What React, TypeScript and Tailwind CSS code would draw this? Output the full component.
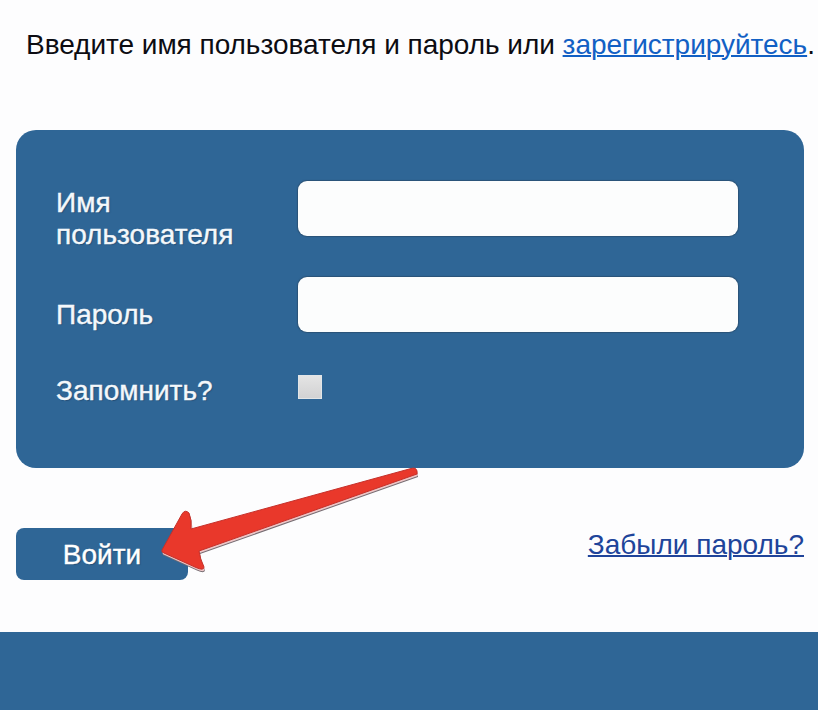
import type { ReactNode } from "react";

// ---------------------------------------------------------------------------
// Form pieces
// ---------------------------------------------------------------------------

interface FieldRowProps {
  id: string;
  label: ReactNode;
  className: string;
  labelClassName: string;
  children: ReactNode;
}

function FieldRow({ id, label, className, labelClassName, children }: FieldRowProps) {
  return (
    <div className={`flex items-start ${className}`}>
      <label
        htmlFor={id}
        className={`block w-[242px] shrink-0 text-[#f4f8fb] [-webkit-text-stroke:0.4px_#f4f8fb] [text-shadow:1px_1px_1px_#234f78] ${labelClassName}`}
      >
        {label}
      </label>
      {children}
    </div>
  );
}

function TextInput({ id, type }: { id: string; type: string }) {
  return (
    <input
      id={id}
      type={type}
      className="h-[55px] w-[440px] rounded-[9px] bg-[#fcfdfd] px-3 text-black shadow-[0_0_1px_1px_#2b5377] outline-none"
    />
  );
}

/** Red arrow that points at the submit button. */
function PointerArrow() {
  const shape =
    "M162 550 L182 514 Q185 509 189 513 Q192 520 191 529 L411 468.500 Q416 467 417 471 L417 474 L199 551 Q200 559 204 567 Q204 571 196 567.500 L164 553 Q161 552 162 550 Z";

  return (
    <svg
      className="pointer-events-none absolute left-0 top-0"
      width="818"
      height="710"
      viewBox="0 0 818 710"
      fill="none"
      aria-hidden
    >
      <path d={shape} fill="#756c72" transform="translate(1 3)" />
      <path d={shape} fill="#edc6c7" transform="translate(.8 2)" />
      <path d={shape} fill="#e9382b" stroke="#c5302a" strokeWidth="1" />
    </svg>
  );
}

// ---------------------------------------------------------------------------
// Page
// ---------------------------------------------------------------------------

export default function App() {
  return (
    <div className="relative flex h-[710px] w-[818px] flex-col overflow-hidden bg-[#fdfdfe] font-['Liberation_Sans',Arial,sans-serif] text-[28px] leading-8">
      <p className="mt-[29px] ml-[26px] whitespace-nowrap tracking-[-0.03px] text-[#0c0c12]">
        Введите имя пользователя и пароль или{" "}
        <a href="#register" className="text-[#1260c4] underline decoration-2 underline-offset-1">
          зарегистрируйтесь
        </a>
        .
      </p>

      <form className="mt-[69px] flex grow flex-col" onSubmit={(e) => e.preventDefault()}>
        <div className="mx-4 h-[338px] w-[788px] rounded-[20px] bg-[#2f6696] pt-[51px] pl-10">
          <FieldRow
            id="username"
            label={
              <>
                Имя
                <br />
                пользователя
              </>
            }
            className="h-24"
            labelClassName="pt-1.5"
          >
            <TextInput id="username" type="text" />
          </FieldRow>
          <FieldRow id="password" label="Пароль" className="h-24" labelClassName="pt-[22px]">
            <TextInput id="password" type="password" />
          </FieldRow>
          <FieldRow id="remember" label="Запомнить?" className="h-8" labelClassName="pt-0.5">
            <input
              id="remember"
              type="checkbox"
              className="mt-[2px] size-6 appearance-none border border-[#e2e5e7] bg-linear-to-b from-[#e4e4e4] to-[#d2d2d3]"
            />
          </FieldRow>
        </div>

        <div className="mr-3.5 ml-4 flex items-start justify-between pt-[60px]">
          <button
            type="submit"
            className="h-[52px] w-[172px] rounded-lg bg-[#2f6696] pt-0.5 text-white [-webkit-text-stroke:0.4px_white] [text-shadow:1px_1px_1px_#234f78]"
          >
            Войти
          </button>
          <a href="#restore" className="mt-px text-[#20449a] underline decoration-2 underline-offset-1">
            Забыли пароль?
          </a>
        </div>
      </form>

      <footer className="h-[78px] shrink-0 bg-[#2f6696]" />

      <PointerArrow />
    </div>
  );
}
